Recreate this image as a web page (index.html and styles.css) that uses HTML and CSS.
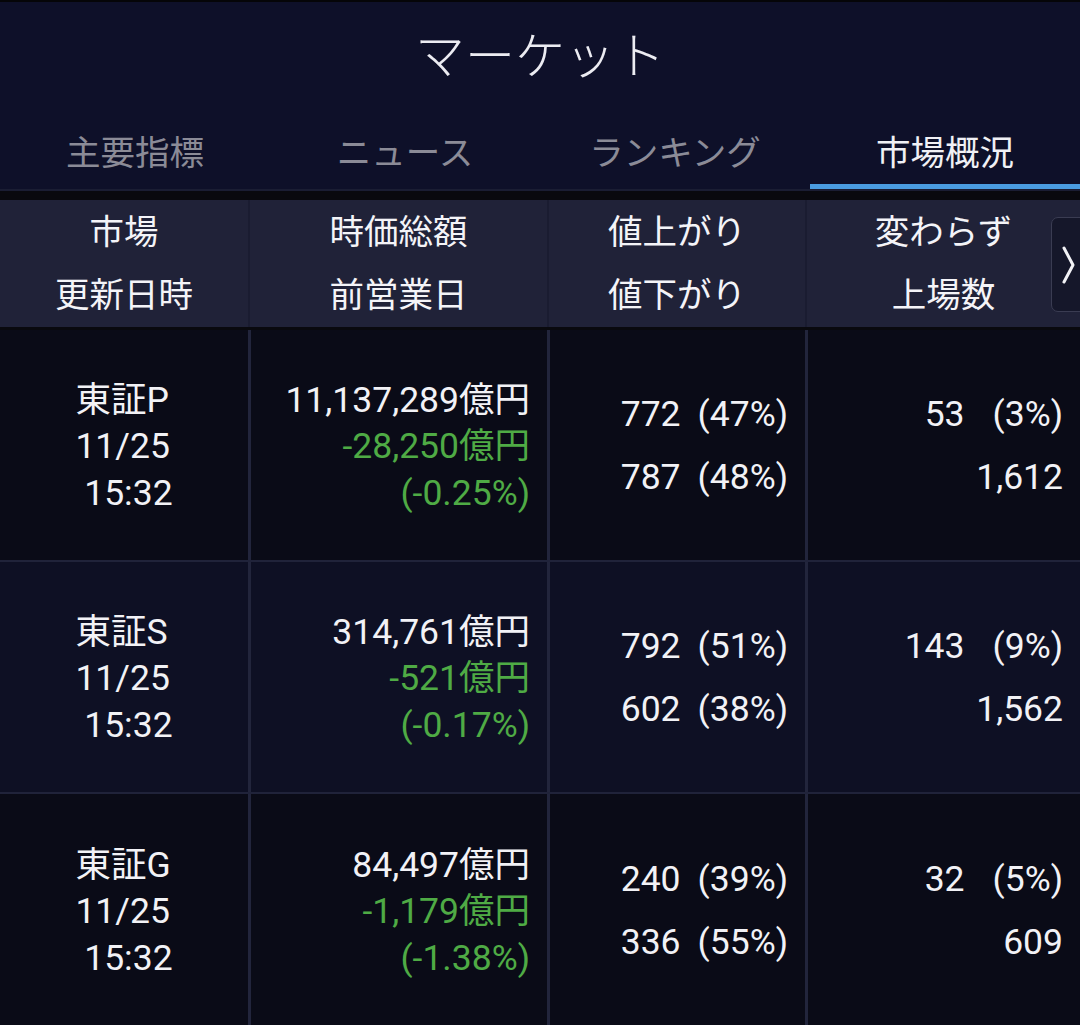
FILE: index.html
```html
<!DOCTYPE html>
<html lang="ja">
<head>
<meta charset="utf-8">
<title>マーケット</title>
<link rel="stylesheet" href="styles.css">
</head>
<body>
<div class="app">
  <header class="topbar">
    <h1 class="title">マーケット</h1>
    <nav class="tabs">
      <div class="tab">主要指標</div>
      <div class="tab">ニュース</div>
      <div class="tab">ランキング</div>
      <div class="tab active">市場概況</div>
    </nav>
  </header>

  <div class="table">
    <div class="thead">
      <div class="th">市場<br>更新日時</div>
      <div class="th">時価総額<br>前営業日</div>
      <div class="th">値上がり<br>値下がり</div>
      <div class="th">変わらず<br>上場数</div>
      <button class="more" aria-label="次へ">
        <svg width="14" height="38" viewBox="0 0 14 38"><polyline points="2,2 11,19 2,36" fill="none" stroke="#f2f2f6" stroke-width="3" stroke-linecap="round" stroke-linejoin="round"/></svg>
      </button>
    </div>

    <div class="tbody">
      <div class="row odd">
        <div class="td market"><div class="mk">東証P<br>11/25<br>&nbsp;15:32</div></div>
        <div class="td cap"><div>11,137,289億円</div><div class="neg">-28,250億円</div><div class="neg">(-0.25%)</div></div>
        <div class="td updown"><div><span>772</span><span class="p3">(47%)</span></div><div><span>787</span><span class="p3">(48%)</span></div></div>
        <div class="td flat"><div><span>53</span><span class="p4">(3%)</span></div><div>1,612</div></div>
      </div>
      <div class="row even">
        <div class="td market"><div class="mk">東証S<br>11/25<br>&nbsp;15:32</div></div>
        <div class="td cap"><div>314,761億円</div><div class="neg">-521億円</div><div class="neg">(-0.17%)</div></div>
        <div class="td updown"><div><span>792</span><span class="p3">(51%)</span></div><div><span>602</span><span class="p3">(38%)</span></div></div>
        <div class="td flat"><div><span>143</span><span class="p4">(9%)</span></div><div>1,562</div></div>
      </div>
      <div class="row odd">
        <div class="td market"><div class="mk">東証G<br>11/25<br>&nbsp;15:32</div></div>
        <div class="td cap"><div>84,497億円</div><div class="neg">-1,179億円</div><div class="neg">(-1.38%)</div></div>
        <div class="td updown"><div><span>240</span><span class="p3">(39%)</span></div><div><span>336</span><span class="p3">(55%)</span></div></div>
        <div class="td flat"><div><span>32</span><span class="p4">(5%)</span></div><div>609</div></div>
      </div>
    </div>
  </div>
</div>
</body>
</html>
```

FILE: styles.css
```css
* { box-sizing: border-box; }

html, body {
  margin: 0;
  padding: 0;
  background: #09090e;
}

body {
  width: 1080px;
  height: 1025px;
  overflow: hidden;
  font-family: Roboto, "Noto Sans CJK JP", sans-serif;
  color: #f2f2f6;
}

.app {
  display: flex;
  flex-direction: column;
}

.topbar {
  background: #0e1029;
  border-top: 2px solid #050508;
  border-bottom: 2px solid #1a1d33;
  height: 191px;
  display: flex;
  flex-direction: column;
}

.title {
  margin: 0;
  height: 106px;
  line-height: 100px;
  text-align: center;
  font-family: "Noto Sans CJK JP", sans-serif;
  font-weight: 300;
  font-size: 50px;
  color: #ececf2;
}

.tabs {
  display: flex;
  height: 81px;
}

.tab {
  flex: 1;
  height: 81px;
  padding-top: 8px;
  line-height: 68px;
  text-align: center;
  font-family: "Noto Sans CJK JP", sans-serif;
  font-size: 34.5px;
  color: #8b8b97;
  border-bottom: 5px solid transparent;
}

.tab.active {
  color: #f0f0f5;
  border-bottom-color: #4a9ce0;
}

.table {
  margin-top: 9px;
  display: flex;
  flex-direction: column;
}

.thead {
  position: relative;
  display: grid;
  grid-template-columns: 248px 297px 256px 1fr;
  column-gap: 2px;
  background: #1a1c31;
  height: 127px;
}

.th {
  background: #202238;
  text-align: center;
  font-size: 34.5px;
  line-height: 63px;
  padding-top: 1px;
  color: #f4f4f8;
}

.more {
  position: absolute;
  left: 1051px;
  top: 17px;
  width: 40px;
  height: 95px;
  padding: 0 0 0 10px;
  margin: 0;
  border: 1.5px solid #3a3c52;
  border-radius: 7px;
  background: #15172a;
  display: flex;
  align-items: center;
  justify-content: flex-start;
}

.tbody {
  margin-top: 3px;
  display: flex;
  flex-direction: column;
  row-gap: 2px;
  background: #20233a;
}

.row {
  display: grid;
  grid-template-columns: 248px 296px 255px 1fr;
  column-gap: 3px;
  height: 230px;
  background: #22253c;
}

.row:last-child { height: 232px; }

.row.odd .td { background: #0a0b17; }
.row.even .td { background: #0e1024; }

.td {
  font-size: 35.5px;
  display: flex;
  flex-direction: column;
  justify-content: center;
}

.market {
  align-items: center;
}

.mk {
  text-align: left;
  line-height: 46.5px;
  padding-top: 3px;
}

.cap {
  align-items: flex-end;
  padding-right: 17px;
  line-height: 46.5px;
  padding-top: 3px;
}

.neg { color: #4fab45; }

.updown, .flat {
  align-items: flex-end;
  padding-right: 17px;
  line-height: 63px;
  padding-top: 2px;
}

.p3 { margin-left: 17px; }
.p4 { margin-left: 28px; }
```
